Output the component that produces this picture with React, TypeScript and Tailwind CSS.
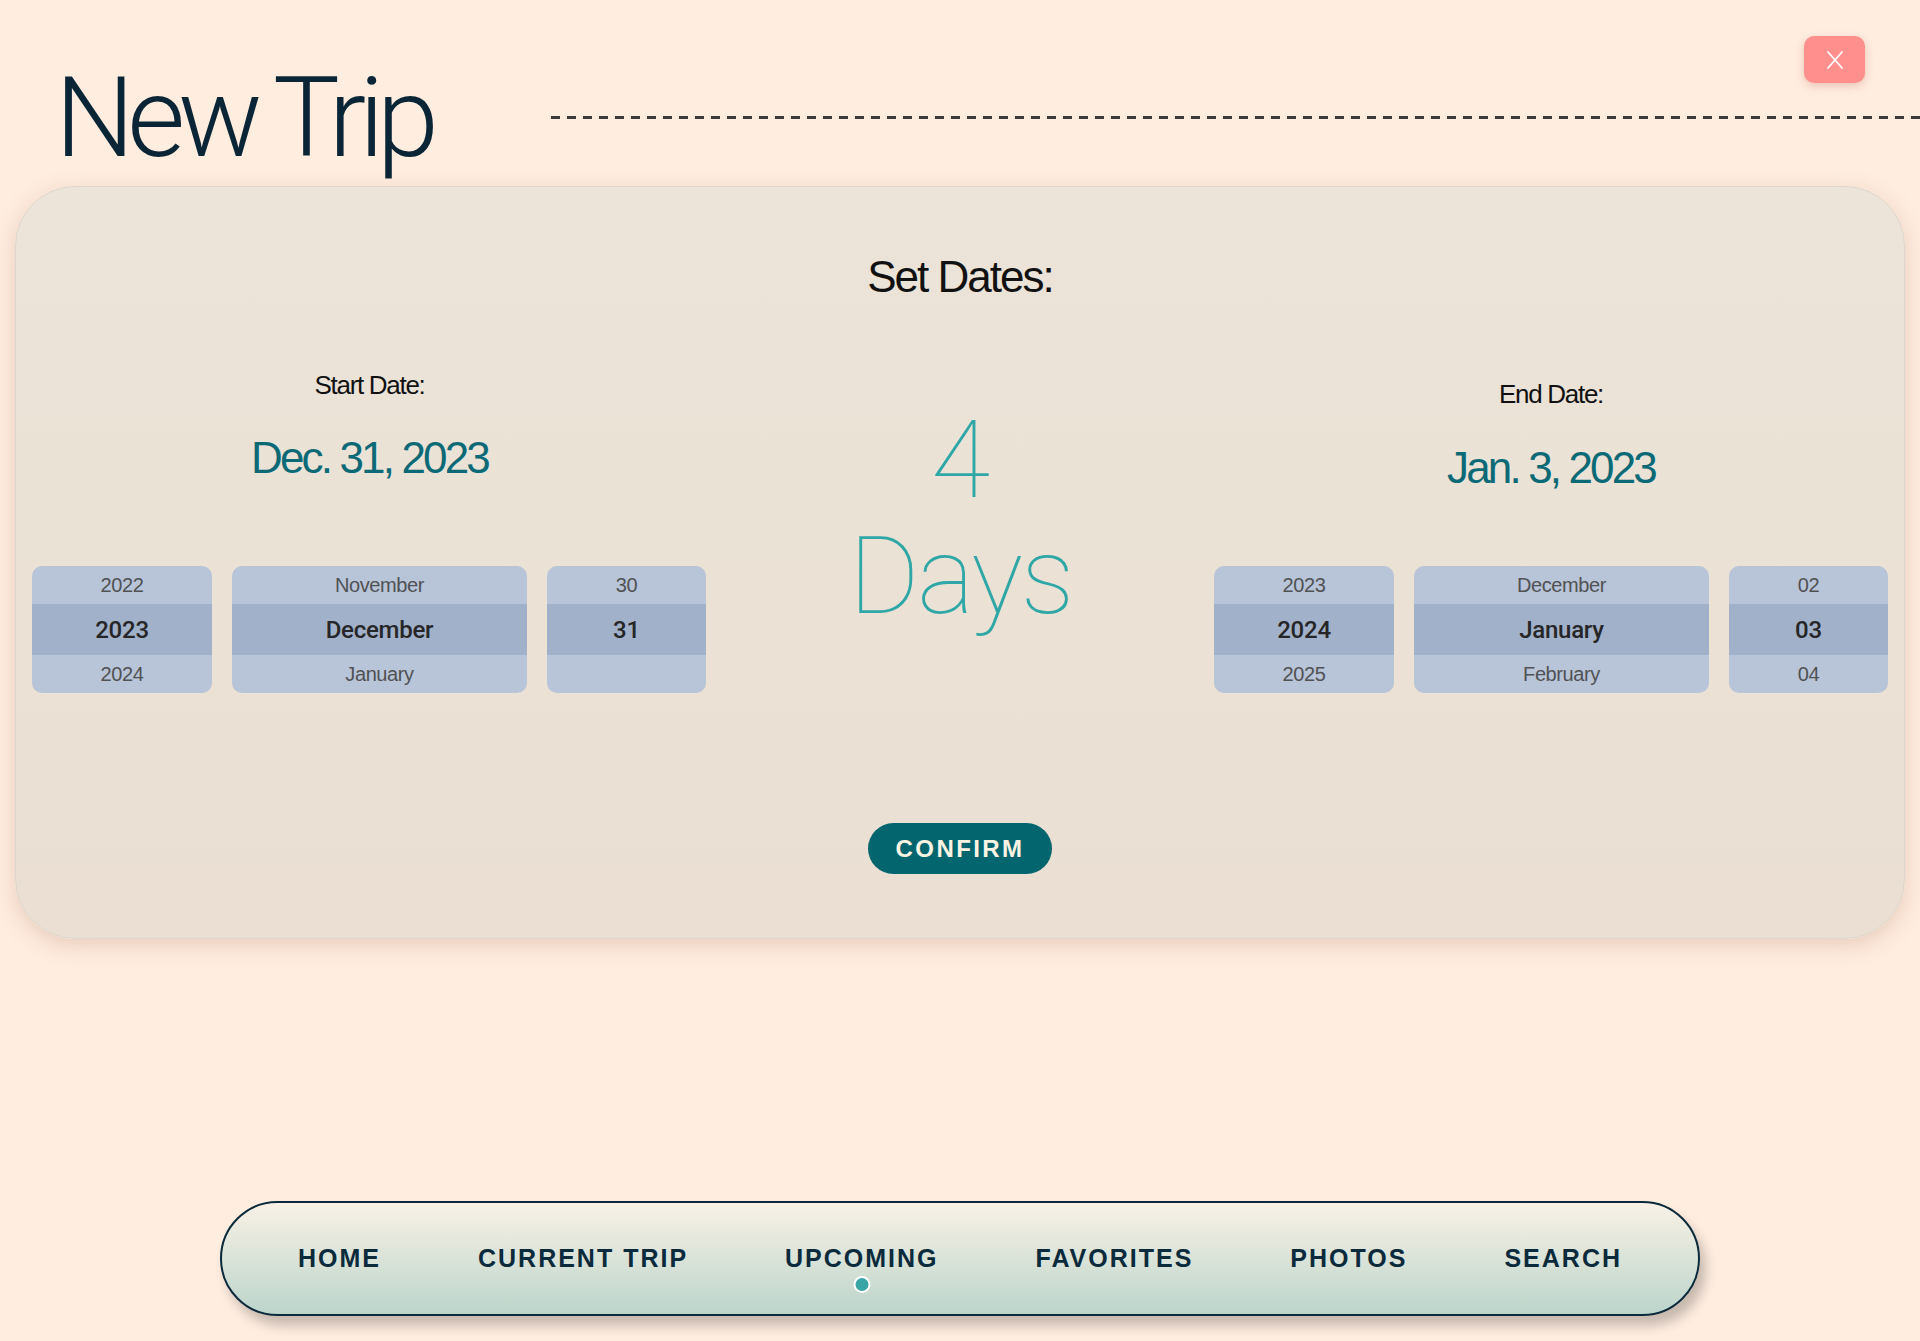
import React from 'react';

type Col = { w: string; top: string; mid: string; bot: string };

const startCols: Col[] = [
  { w: 'w-[180px]', top: '2022', mid: '2023', bot: '2024' },
  { w: 'w-[295px]', top: 'November', mid: 'December', bot: 'January' },
  { w: 'w-[159px]', top: '30', mid: '31', bot: '' },
];

const endCols: Col[] = [
  { w: 'w-[180px]', top: '2023', mid: '2024', bot: '2025' },
  { w: 'w-[295px]', top: 'December', mid: 'January', bot: 'February' },
  { w: 'w-[159px]', top: '02', mid: '03', bot: '04' },
];

const navItems = ['HOME', 'CURRENT TRIP', 'UPCOMING', 'FAVORITES', 'PHOTOS', 'SEARCH'];

const Picker: React.FC<{ cols: Col[] }> = ({ cols }) => (
  <div className="flex gap-[20px]">
    {cols.map((c, i) => (
      <div key={i} className={`${c.w} rounded-[10px] overflow-hidden bg-[#b8c4d8] flex flex-col`}>
        <div className="h-[38px] flex items-center justify-center text-[20px] text-[#505254] tracking-[-0.02em]">
          {c.top}
        </div>
        <div className="h-[51px] flex items-center justify-center bg-[#a1b1c9] font-['Roboto',sans-serif] text-[24px] font-medium text-[#262628] tracking-[-0.01em]">
          {c.mid}
        </div>
        <div className="h-[38px] flex items-center justify-center text-[20px] text-[#505254] tracking-[-0.02em]">
          {c.bot}
        </div>
      </div>
    ))}
  </div>
);

const App: React.FC = () => {
  return (
    <div className="min-h-screen w-full bg-[#ffede0] flex flex-col font-['Liberation_Sans',Arial,sans-serif]">
      <header className="flex h-[186px]">
        <div className="w-[551px] shrink-0 pl-[55px] pt-[62px]">
          <h1 className="font-['Roboto',sans-serif] font-light text-[112px] leading-none tracking-[-0.065em] text-[#0a2536]">
            New Trip
          </h1>
        </div>
        <div className="flex-1 flex flex-col">
          <button className="self-end mt-[36px] mr-[55px] w-[61px] h-[47px] rounded-[10px] bg-[#ff8f8c] shadow-[0_3px_8px_rgba(190,120,100,0.35)] flex items-center justify-center">
            <svg width="22" height="22" viewBox="0 0 22 22" fill="none" stroke="#ffffff" strokeWidth="1.8" strokeLinecap="round">
              <line x1="4" y1="3" x2="18" y2="19" />
              <line x1="18" y1="3" x2="4" y2="19" />
            </svg>
          </button>
          <div className="mt-[33px] h-[3px] w-full bg-[repeating-linear-gradient(90deg,#3a3a3a_0_9px,transparent_9px_16px)]" />
        </div>
      </header>

      <section className="mx-[15px] h-[753px] rounded-[60px] border border-[#ddd6cc] bg-gradient-to-b from-[#ece4d9] to-[#eadfd2] shadow-[0_6px_22px_rgba(170,120,90,0.28)] flex flex-col px-[16px]">
        <h2 className="pt-[68px] text-center text-[44px] leading-none tracking-[-0.045em] text-[#111]">Set Dates:</h2>

        <div className="grid grid-cols-[675px_1fr_674px]">
          <div className="flex flex-col items-center pt-[73px]">
            <div className="text-[26px] leading-none tracking-[-0.05em] text-[#111]">Start Date:</div>
            <div className="mt-[38px] text-[44px] leading-none tracking-[-0.065em] text-[#0c6a77]">Dec. 31, 2023</div>
            <div className="mt-[86px] self-stretch">
              <Picker cols={startCols} />
            </div>
          </div>

          <div className="flex flex-col items-center pt-[107px] font-['Roboto',sans-serif] font-thin text-[#2fa7a6]">
            <div className="text-[108px] leading-none">4</div>
            <div className="mt-[8px] text-[108px] leading-none tracking-[-0.02em]">Days</div>
          </div>

          <div className="flex flex-col items-center pt-[82px]">
            <div className="text-[26px] leading-none tracking-[-0.05em] text-[#111]">End Date:</div>
            <div className="mt-[39px] text-[44px] leading-none tracking-[-0.065em] text-[#0c6a77]">Jan. 3, 2023</div>
            <div className="mt-[76px] self-stretch">
              <Picker cols={endCols} />
            </div>
          </div>
        </div>

        <button className="mt-[130px] self-center w-[184px] h-[51px] rounded-full bg-[#03666f] text-[#fdf3e3] text-[24px] font-semibold tracking-[0.1em] flex items-center justify-center">
          CONFIRM
        </button>
      </section>

      <nav className="mt-[262px] mx-auto w-[1480px] h-[115px] rounded-full border-2 border-[#0b2a3b] bg-gradient-to-b from-[#f9f1e6] to-[#bcd5cb] shadow-[6px_10px_12px_rgba(0,0,0,0.22)] flex items-center justify-between px-[76px]">
        {navItems.map((item) => (
          <div key={item} className="relative text-[25px] font-semibold tracking-[0.08em] text-[#0b2a3b]">
            {item}
            {item === 'UPCOMING' && (
              <span className="absolute left-1/2 -translate-x-1/2 top-[36px] w-[17px] h-[17px] rounded-full bg-[#39a5a5] border-2 border-white" />
            )}
          </div>
        ))}
      </nav>
    </div>
  );
};

export default App;
